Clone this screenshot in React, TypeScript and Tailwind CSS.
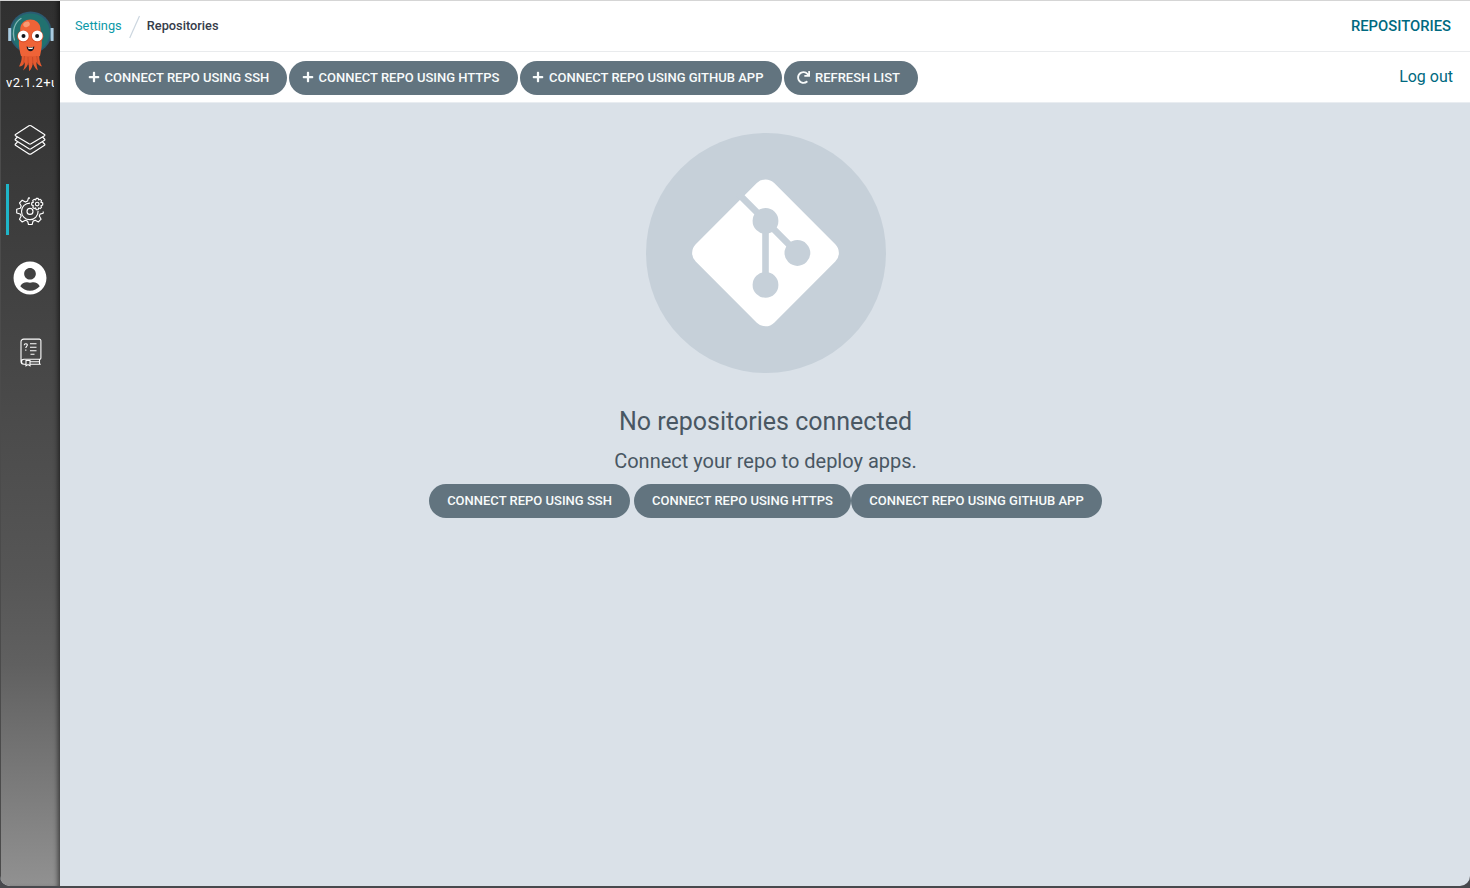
import React from 'react';
import { FaPlus, FaRedo, FaUserCircle } from 'react-icons/fa';

function ArgoLogo() {
  return (
    <svg className="block h-[64px] w-[48px]" viewBox="0 0 48 64" fill="none">
      <circle cx="23.7" cy="22.4" r="21" fill="#2b5b72" />
      <circle cx="23.7" cy="22.6" r="19.2" fill="#21716f" />
      <rect x="1.2" y="18" width="3" height="13" rx="0.6" fill="#a9cbe0" />
      <rect x="43.6" y="18" width="3" height="13" rx="0.6" fill="#a9cbe0" />
      <path d="M7.5 30C4.8 21 7.5 12.5 14 8.5" stroke="#83b5b5" strokeWidth="1.3" strokeLinecap="round" />
      <path d="M13.7 43C15.7 47 14.5 52 12 56.5C15 56.5 17 54.5 17.7 52C18 55 17.5 57.5 16 60.5C19.5 58 21 55 21.3 52.5C22 56 22 58.5 22 61.2C24.7 59 25.7 56 25.7 52.5C27 56 28 58.5 31 60.5C29.8 57 29.4 55 29.4 52C31 54.5 32.5 56 35 56.5C32.6 52 31.5 47 33 43Z" fill="#e45a30" />
      <path d="M13.2 25V19.5C13.2 6.2 33.6 6.2 33.6 19.5V25C36 32 34.5 39 33 46H14C12.3 39 10.7 32 13.2 25Z" fill="#ef6337" />
      <path d="M17.5 46L16.5 54M21 47L21.2 55M25.5 47L26 55M29.7 46L30.7 53" stroke="#c94725" strokeWidth="0.8" />
      <ellipse cx="19.5" cy="14.4" rx="3.4" ry="2.6" fill="#f89a73" transform="rotate(-25 19.5 14.4)" />
      <circle cx="16.3" cy="26.3" r="6.1" fill="#d64c27" />
      <circle cx="30.3" cy="26.3" r="6.1" fill="#d64c27" />
      <circle cx="16.3" cy="25.9" r="5.4" fill="#fff" />
      <circle cx="30.3" cy="25.9" r="5.4" fill="#fff" />
      <circle cx="16.5" cy="25.9" r="2" fill="#11151b" />
      <circle cx="30.1" cy="25.9" r="2" fill="#11151b" />
      <path d="M19.6 36.3C21.5 37.8 25.5 37.8 27.3 36.3C27.3 42.8 19.8 43 19.6 36.3Z" fill="#171a20" />
      <path d="M21 37.3C22.7 38 24.3 38 26 37.3L25.5 39H21.5Z" fill="#fff" />
    </svg>
  );
}

function LayersIcon() {
  return (
    <svg className="block h-8 w-8" viewBox="0 0 32 32" fill="none" stroke="#fff" strokeWidth="1.2" strokeLinejoin="round">
      <path d="M15 1.8Q16 1.2 17 1.8L30.5 10.5Q31.2 11.1 30.5 11.7L17 19.8Q16 20.3 15 19.8L1.5 11.7Q.8 11.1 1.5 10.5Z" />
      <path d="M3.5 13L1.5 15Q.8 15.7 1.5 16.3L15 24.8Q16 25.3 17 24.8L30.5 16.3Q31.2 15.7 30.5 15L28.5 13" />
      <path d="M3.5 18L1.5 20Q.8 20.7 1.5 21.3L15 29.9Q16 30.5 17 29.9L30.5 21.3Q31.2 20.7 30.5 20L28.5 18" />
    </svg>
  );
}

function GearsIcon() {
  return (
    <svg className="block h-7 w-7" viewBox="0 0 28 28" fill="none" stroke="#fff" strokeWidth="1.15" strokeLinejoin="round">
      <path d="M14 1.1L12.5.9L11.5 4.1L9.5 5L6.2 3.2L3.5 6L5.2 9L4.2 11.3L.7 12.2V16L4.2 17L5.2 19.1L3.5 22.3L6.2 25L9.4 23.3L11.6 24.2L12.5 27.5H16.1L17.1 24.1L19.2 23.2L22.4 24.9L25.1 22.2L23.3 19L24 17.1L27.2 16.3V14.5" />
      <path d="M14 6.1A8.3 8.3 0 1 0 22.1 14" />
      <circle cx="14" cy="14.4" r="3" />
      <circle cx="21.2" cy="7" r="1.8" />
      <path d="M20.3 1.3H22.1L22.7 3L24.2 2.3L25.6 3.7L24.8 5.2L26.7 5.9V8L24.9 8.7L25.6 10.2L24.2 11.6L22.7 10.9L22.1 12.7H20.2L19.6 10.9L18.1 11.6L16.7 10.2L17.4 8.7L15.7 8V5.9L17.4 5.2L16.7 3.7L18.1 2.3L19.6 3Z" />
    </svg>
  );
}

function DocsIcon() {
  return (
    <svg className="block h-[29px] w-[22px]" viewBox="0 0 22 29" fill="none" stroke="#fff" strokeWidth="1.1">
      <path d="M6 26.3H4A3 3 0 0 1 1 23.3V3.8A2.7 2.7 0 0 1 3.7 1.1H19.2A1.7 1.7 0 0 1 20.9 2.8V20A1.3 1.3 0 0 1 19.6 21.3H4A2.5 2.5 0 0 0 4 26.3M10 26.3H20.8M19.5 21.3V26.3M10 23.8H19.5" />
      <path d="M6 22.5H10V27.7L8 26.6L6 27.7Z" />
      <path d="M4.2 7.3C4.2 5.2 7.3 5.3 7.3 7C7.3 8.3 5.8 8.4 5.8 10M5.8 11.5V12.7M10 5.8H16.5M10 9.3H16.5M10 12.8H16.5M10.5 16.3H14.5" />
    </svg>
  );
}

function GitBadge() {
  return (
    <svg className="block h-60 w-60" viewBox="0 0 240 240">
      <circle cx="120" cy="120" r="120" fill="#c6d0d9" />
      <rect x="64" y="64.4" width="111" height="111" rx="12.3" fill="#fff" transform="rotate(45 119.5 119.9)" />
      <g stroke="#c6d0d9" strokeWidth="6.6">
        <path d="M92 60.3L151.3 119.8M119.5 88V151.5" />
      </g>
      <g fill="#c6d0d9">
        <circle cx="119.5" cy="87.9" r="12.9" />
        <circle cx="151.4" cy="120" r="12.9" />
        <circle cx="119.5" cy="151.9" r="12.9" />
      </g>
    </svg>
  );
}

const pill =
  'flex h-[34px] items-center whitespace-nowrap rounded-full bg-[#62747f] text-[13px] font-medium leading-[34px] text-[#f8fbfb]';

function ActionButton({ icon, label, size }: { icon: React.ReactNode; label: string; size: string }) {
  return (
    <button className={`${pill} ${size} gap-[5px]`}>
      <span className="mb-px">{icon}</span>
      <span>{label}</span>
    </button>
  );
}

function PlainButton({ label, size }: { label: string; size: string }) {
  return <button className={`${pill} ${size} justify-center`}>{label}</button>;
}

export default function App() {
  return (
    <div className="h-[888px] w-[1470px] overflow-hidden bg-[#48494d] pb-[2px] font-['Roboto',sans-serif]">
      <div className="flex h-[886px] overflow-hidden rounded-b-[10px] border-t border-[#d5d5d5] bg-[#dae1e8]">
        <nav className="flex w-[60px] shrink-0 flex-col items-center border-l border-[#4b4b4b] bg-[linear-gradient(180deg,#303030_0%,#353535_12%,#434343_35%,#565656_65%,#606060_75%,#919191_100%)] shadow-[inset_-5px_0_5px_-3px_rgba(0,0,0,0.55)]">
          <div className="mt-[9px] pl-[1px]">
            <ArgoLogo />
          </div>
          <div className="mr-px mt-px w-[48px] overflow-hidden whitespace-nowrap text-[13px] leading-4 tracking-[0.35px] text-white">v2.1.2+unknown</div>
          <a className="mr-px mt-[33px]"><LayersIcon /></a>
          <a className="mt-[28px] flex h-[51px] w-full items-center pl-[5px]">
            <span className="h-full w-[3px] bg-[#1fb5c8]" />
            <span className="ml-[7px] mt-[3px]"><GearsIcon /></span>
          </a>
          <a className="mr-px mt-[26px]"><FaUserCircle className="block h-[34px] w-[34px] text-white" /></a>
          <a className="mt-[43px]"><DocsIcon /></a>
        </nav>
        <main className="flex min-w-0 flex-1 flex-col">
          <header className="flex h-[51px] items-center justify-between border-b border-[#e9ebed] bg-white pl-[15px] pr-[19px]">
            <div className="flex items-center text-[12.8px] leading-5">
              <a className="text-[#0c99a8]">Settings</a>
              <svg className="mx-[6px] mt-[2px] h-6 w-[13px]" viewBox="0 0 13 24" fill="none">
                <path d="M1.7 23L11.5 1" stroke="#ccd6df" strokeWidth="1.2" />
              </svg>
              <span className="font-medium text-[#363c4a]">Repositories</span>
            </div>
            <div className="text-[14.8px] font-medium text-[#006980]">REPOSITORIES</div>
          </header>
          <div className="flex h-[51px] items-center justify-between border-b border-[#e9edf1] bg-white pl-[15px] pr-[17px]">
            <div className="mt-px flex gap-[2px]">
              <ActionButton icon={<FaPlus className="h-3 w-3" />} label="CONNECT REPO USING SSH" size="w-[212px] pl-[12.5px]" />
              <ActionButton icon={<FaPlus className="h-3 w-3" />} label="CONNECT REPO USING HTTPS" size="w-[229px] pl-[12.5px]" />
              <ActionButton icon={<FaPlus className="h-3 w-3" />} label="CONNECT REPO USING GITHUB APP" size="w-[262px] pl-[12px]" />
              <ActionButton icon={<FaRedo className="h-[13px] w-[13px]" />} label="REFRESH LIST" size="w-[134px] pl-[13px]" />
            </div>
            <a className="text-[16px] leading-5 text-[#006980]">Log out</a>
          </div>
          <section className="flex flex-1 flex-col items-center pl-[1px] pt-[30px] text-[#495763]">
            <GitBadge />
            <h4 className="mt-[32px] text-[25px] leading-[34px]">No repositories connected</h4>
            <h5 className="mt-[7px] text-[20px] leading-[30px]">Connect your repo to deploy apps.</h5>
            <div className="mt-[8px] flex">
              <PlainButton label="CONNECT REPO USING SSH" size="mr-1 w-[201px]" />
              <PlainButton label="CONNECT REPO USING HTTPS" size="w-[217px]" />
              <PlainButton label="CONNECT REPO USING GITHUB APP" size="w-[251px]" />
            </div>
          </section>
        </main>
      </div>
    </div>
  );
}
